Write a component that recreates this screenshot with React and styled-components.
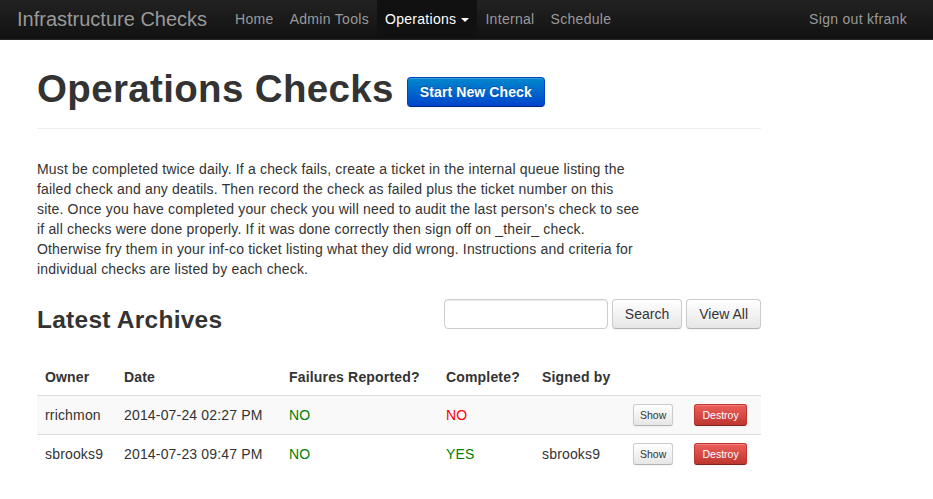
import React from 'react'
import styled, { createGlobalStyle } from 'styled-components'

const GlobalStyle = createGlobalStyle`
    body {
        margin: 0;
        font-family: "Liberation Sans", Arial, sans-serif;
        font-size: 14px;
        line-height: 20px;
        letter-spacing: 0.17px;
        color: #333333;
        background: #ffffff;
    }
`

const introLines = [
    'Must be completed twice daily. If a check fails, create a ticket in the internal queue listing the',
    'failed check and any deatils. Then record the check as failed plus the ticket number on this',
    "site. Once you have completed your check you will need to audit the last person's check to see",
    'if all checks were done properly. If it was done correctly then sign off on _their_ check.',
    'Otherwise fry them in your inf-co ticket listing what they did wrong. Instructions and criteria for',
    'individual checks are listed by each check.'
]

const rows = [
    { owner: 'rrichmon', date: '2014-07-24 02:27 PM', failures: false, complete: false, signed: '' },
    { owner: 'sbrooks9', date: '2014-07-23 09:47 PM', failures: false, complete: true, signed: 'sbrooks9' }
]

const columns = [
    { label: 'Owner', width: 79 },
    { label: 'Date', width: 165 },
    { label: 'Failures Reported?', width: 157 },
    { label: 'Complete?', width: 96 },
    { label: 'Signed by', width: 91 },
    { label: '', width: 61 },
    { label: '', width: 75 }
]

class App extends React.Component {
    render () {
        return (
            <>
                <GlobalStyle />
                <Navbar>
                    <Brand>Infrastructure Checks</Brand>
                    <Nav>
                        <NavLink>Home</NavLink>
                        <NavLink>Admin Tools</NavLink>
                        <NavLink active>Operations <Caret /></NavLink>
                        <NavLink>Internal</NavLink>
                        <NavLink>Schedule</NavLink>
                    </Nav>
                    <NavRight>
                        <NavLink>Sign out kfrank</NavLink>
                    </NavRight>
                </Navbar>
                <Container>
                    <PageHeader>
                        <H1>Operations Checks</H1>
                        <Btn variant="primary">Start New Check</Btn>
                    </PageHeader>
                    <Intro>
                        {introLines.map((l, i) => <Line key={i}>{l}</Line>)}
                    </Intro>
                    <SectionRow>
                        <H2>Latest Archives</H2>
                        <SearchForm>
                            <SearchInput type="text" />
                            <Btn>Search</Btn>
                            <Btn>View All</Btn>
                        </SearchForm>
                    </SectionRow>
                    <Table>
                        <colgroup>
                            {columns.map((c, i) => <col key={i} style={{ width: c.width }} />)}
                        </colgroup>
                        <thead>
                            <tr>
                                {columns.map((c, i) => <Th key={i}>{c.label}</Th>)}
                            </tr>
                        </thead>
                        <tbody>
                            {rows.map((r, i) => (
                                <Tr key={i} striped={i % 2 === 0}>
                                    <Td>{r.owner}</Td>
                                    <Td>{r.date}</Td>
                                    <Td><Status ok={!r.failures}>{r.failures ? 'YES' : 'NO'}</Status></Td>
                                    <Td><Status ok={r.complete}>{r.complete ? 'YES' : 'NO'}</Status></Td>
                                    <Td>{r.signed}</Td>
                                    <Td><MiniBtn>Show</MiniBtn></Td>
                                    <Td><MiniBtn danger>Destroy</MiniBtn></Td>
                                </Tr>
                            ))}
                        </tbody>
                    </Table>
                </Container>
            </>
        )
    }
}

export default App

const Navbar = styled.div`
    height: 40px;
    display: flex;
    align-items: stretch;
    background-image: linear-gradient(to bottom, #222222, #111111);
    border-bottom: 1px solid #252525;
    box-sizing: border-box;
    padding: 0 18px 0 17px;
`
const Brand = styled.div`
    font-size: 20px;
    line-height: 38px;
    letter-spacing: 0;
    color: #999999;
    padding-right: 20px;
`
const Nav = styled.div`
    display: flex;
`
const NavRight = styled(Nav)`
    margin-left: auto;
`
const NavLink = styled.div`
    display: flex;
    align-items: center;
    padding: 0 8px 1px;
    color: ${p => p.active ? '#ffffff' : '#999999'};
    background: ${p => p.active ? '#111111' : 'transparent'};
    font-size: 14px;
    letter-spacing: 0.3px;
`
const Caret = styled.span`
    display: inline-block;
    margin-left: 5px;
    margin-top: 1px;
    border-top: 4px solid #ffffff;
    border-left: 4px solid transparent;
    border-right: 4px solid transparent;
`
const Container = styled.div`
    width: 724px;
    margin-left: 37px;
`
const PageHeader = styled.div`
    display: flex;
    align-items: center;
    margin: 19px 0 30px;
    padding-bottom: 9px;
    border-bottom: 1px solid #eeeeee;
`
const H1 = styled.h1`
    margin: 10px 13px 10px 0;
    font-size: 38.5px;
    line-height: 40px;
    letter-spacing: 0.35px;
    font-weight: bold;
    color: #333333;
`
const Btn = styled.button`
    font-family: "Liberation Sans", Arial, sans-serif;
    font-size: 14px;
    line-height: 20px;
    letter-spacing: ${p => p.variant === 'primary' ? '0.1px' : '0'};
    padding: 4px 12px;
    height: 30px;
    margin-top: ${p => p.variant === 'primary' ? '5px' : '0'};
    border-radius: 4px;
    cursor: pointer;
    font-weight: ${p => p.variant === 'primary' ? 'bold' : 'normal'};
    color: ${p => p.variant === 'primary' ? '#ffffff' : '#333333'};
    background-image: ${p => p.variant === 'primary'
        ? 'linear-gradient(to bottom, #0088cc, #0044cc)'
        : 'linear-gradient(to bottom, #ffffff, #e6e6e6)'};
    border: 1px solid ${p => p.variant === 'primary' ? '#0044cc' : '#cccccc'};
    border-bottom-color: ${p => p.variant === 'primary' ? '#002a80' : '#b3b3b3'};
    box-shadow: inset 0 1px 0 rgba(255,255,255,.2), 0 1px 2px rgba(0,0,0,.05);
    text-shadow: ${p => p.variant === 'primary' ? '0 -1px 0 rgba(0,0,0,.25)' : '0 1px 1px rgba(255,255,255,.75)'};
`
const Intro = styled.p`
    margin: 0 0 20px;
`
const Line = styled.span`
    display: block;
    white-space: nowrap;
`
const SectionRow = styled.div`
    display: flex;
    justify-content: space-between;
    align-items: flex-start;
    margin-bottom: 19px;
`
const H2 = styled.h2`
    margin: 1px 0 0;
    font-size: 24.5px;
    line-height: 40px;
    letter-spacing: 0.25px;
    font-weight: bold;
    color: #333333;
`
const SearchForm = styled.div`
    display: flex;
    gap: 4px;
`
const SearchInput = styled.input`
    width: 164px;
    height: 30px;
    box-sizing: border-box;
    border: 1px solid #cccccc;
    border-radius: 4px;
    box-shadow: inset 0 1px 1px rgba(0,0,0,.075);
    padding: 4px 6px;
    font-size: 14px;
`
const Table = styled.table`
    width: 724px;
    border-collapse: collapse;
    table-layout: fixed;
`
const Th = styled.th`
    text-align: left;
    padding: 8px;
    font-weight: bold;
    line-height: 20px;
`
const Tr = styled.tr`
    height: 39px;
    background: ${p => p.striped ? '#f9f9f9' : 'transparent'};
    border-top: 1px solid #dddddd;
`
const Td = styled.td`
    padding: 0 8px;
    line-height: 20px;
    vertical-align: middle;
`
const Status = styled.span`
    color: ${p => p.ok ? '#008000' : '#ff0000'};
`
const MiniBtn = styled.button`
    display: block;
    font-family: "Liberation Sans", Arial, sans-serif;
    font-size: 10.5px;
    line-height: 14px;
    letter-spacing: 0;
    padding: ${p => p.danger ? '3px 7.5px' : '3px 6px'};
    height: 22px;
    border-radius: 3px;
    color: ${p => p.danger ? '#ffffff' : '#333333'};
    background-image: ${p => p.danger
        ? 'linear-gradient(to bottom, #ee5f5b, #bd362f)'
        : 'linear-gradient(to bottom, #ffffff, #e6e6e6)'};
    border: 1px solid ${p => p.danger ? '#bd362f' : '#cccccc'};
    border-bottom-color: ${p => p.danger ? '#802420' : '#b3b3b3'};
    box-shadow: inset 0 1px 0 rgba(255,255,255,.2), 0 1px 2px rgba(0,0,0,.05);
`
